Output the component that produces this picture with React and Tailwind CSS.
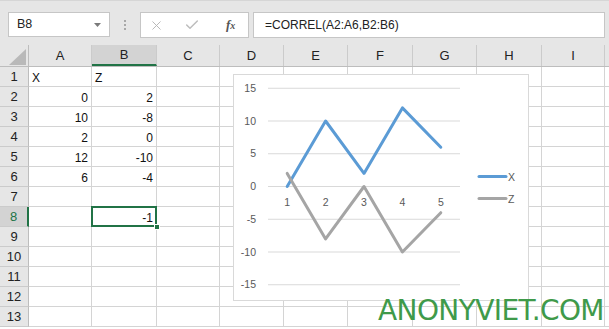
import { X, Check } from 'lucide-react';

const COLS = [
  { key: 'A', w: 'w-[63px]' },
  { key: 'B', w: 'w-[65px]' },
  { key: 'C', w: 'w-[63px]' },
  { key: 'D', w: 'w-[64px]' },
  { key: 'E', w: 'w-[64px]' },
  { key: 'F', w: 'w-[65px]' },
  { key: 'G', w: 'w-[64px]' },
  { key: 'H', w: 'w-[65px]' },
  { key: 'I', w: 'w-[63px]' },
];

const DATA = {
  1: { A: ['X', 'left'], B: ['Z', 'left'] },
  2: { A: ['0'], B: ['2'] },
  3: { A: ['10'], B: ['-8'] },
  4: { A: ['2'], B: ['0'] },
  5: { A: ['12'], B: ['-10'] },
  6: { A: ['6'], B: ['-4'] },
  8: { B: ['-1'] },
};

const XS = [0, 10, 2, 12, 6];
const ZS = [2, -8, 0, -10, -4];

// chart coords (relative to chart box)
const cx = (i) => 54.2 + 38.4 * i;
const cy = (v) => 112.5 - 6.55 * v;
const pts = (arr) => arr.map((v, i) => `${cx(i)},${cy(v)}`).join(' ');

function FormulaBar() {
  return (
    <div className="h-[45px] bg-[#e6e6e6] border-t border-[#d6d6d6] flex items-start pt-[11px]">
      <div className="ml-[8px] w-[102px] h-[25px] bg-white border border-[#c6c6c6] flex items-center justify-between pl-[8px] pr-[8px]">
        <span className="text-[12.5px] text-[#222]">B8</span>
        <svg width="7" height="4" viewBox="0 0 7 4"><path d="M0 0h7L3.5 4z" fill="#7a7a7a" /></svg>
      </div>
      <div className="w-[30px] h-[25px] flex flex-col items-center justify-center gap-[2px]">
        <span className="w-[2px] h-[2px] bg-[#a8a8a8]" />
        <span className="w-[2px] h-[2px] bg-[#a8a8a8]" />
        <span className="w-[2px] h-[2px] bg-[#a8a8a8]" />
      </div>
      <div className="w-[109px] h-[26px] bg-white border border-[#c6c6c6] flex items-center">
        <X size={15} strokeWidth={1.5} className="text-[#b4b4b4] ml-[8px]" />
        <Check size={16} strokeWidth={2.2} className="text-[#bdbdbd] ml-[20px]" />
        <span className="ml-[26px] text-[13px] italic text-[#555] font-['Liberation_Serif',serif] font-semibold">f<span className="text-[10px]">x</span></span>
      </div>
      <div className="ml-[4px] w-[352px] h-[26px] bg-white border border-[#c6c6c6] flex items-center pl-[11px]">
        <span className="text-[12px] text-[#222]">=CORREL(A2:A6,B2:B6)</span>
      </div>
    </div>
  );
}

function HeaderRow() {
  return (
    <div className="flex h-[22px] bg-[#e6e6e6] border-b border-[#bdbdbd]">
      <div className="w-[29px] shrink-0 border-r border-[#bdbdbd] flex items-end justify-end pr-[2px] pb-[1px]">
        <svg width="17" height="16" viewBox="0 0 17 16"><path d="M17 0V16H0z" fill="#b9b9b9" /></svg>
      </div>
      {COLS.map((c) => (
        <div
          key={c.key}
          className={`${c.w} shrink-0 border-r border-[#cbcbcb] flex items-center justify-center text-[13px] text-[#222] ${
            c.key === 'B' ? 'bg-[#d3d3d3] border-b-2 border-b-[#217346]' : ''
          }`}
        >
          {c.key}
        </div>
      ))}
      <div className="flex-1" />
    </div>
  );
}

function Row({ n }) {
  const sel = n === 8;
  return (
    <div className="flex h-[20px]">
      <div
        className={`w-[29px] shrink-0 border-b border-[#cbcbcb] flex items-center justify-center text-[13px] ${
          sel ? 'bg-[#d3d3d3] text-[#217346] border-r-2 border-r-[#217346]' : 'bg-[#e6e6e6] text-[#222] border-r border-r-[#bdbdbd]'
        }`}
      >
        {n}
      </div>
      {COLS.map((c) => {
        const cell = DATA[n]?.[c.key];
        const left = cell?.[1] === 'left';
        const active = sel && c.key === 'B';
        return (
          <div
            key={c.key}
            className={`${c.w} shrink-0 border-r border-b border-[#d4d4d4] flex items-end leading-[14px] pb-[1px] text-[12px] text-[#111] ${
              left ? 'justify-start pl-[3px]' : 'justify-end pr-[3px]'
            } ${active ? 'relative' : ''}`}
          >
            {cell?.[0]}
            {active && (
              <>
                <div className="absolute -left-[1px] -top-[1px] right-[-1px] bottom-[-1px] border-2 border-[#217346]" />
                <div className="absolute right-[-4px] bottom-[-4px] w-[6px] h-[6px] bg-[#217346] border border-white" />
              </>
            )}
          </div>
        );
      })}
      <div className="flex-1 border-b border-[#d4d4d4]" />
    </div>
  );
}

function Chart() {
  const grid = [15, 10, 5, 0, -5, -10, -15];
  return (
    <div className="absolute left-[233px] top-[74px] w-[296px] h-[227px] bg-white border border-[#d9d9d9]">
      <svg width="296" height="227" className="absolute -left-[1px] -top-[1px]" style={{ fontFamily: 'Liberation Sans, Arial, sans-serif' }}>
        {grid.map((v) => (
          <g key={v}>
            <line x1="35" x2="227" y1={cy(v)} y2={cy(v)} stroke="#d9d9d9" strokeWidth="1" />
            <text x="23" y={cy(v) + 3.5} textAnchor="end" fontSize="10.5" fill="#595959">{v}</text>
          </g>
        ))}
        {[1, 2, 3, 4, 5].map((k, i) => (
          <text key={k} x={cx(i)} y="132" textAnchor="middle" fontSize="10.5" fill="#595959">{k}</text>
        ))}
        <polyline points={pts(XS)} fill="none" stroke="#5b9bd5" strokeWidth="3" strokeLinejoin="round" strokeLinecap="round" />
        <polyline points={pts(ZS)} fill="none" stroke="#a5a5a5" strokeWidth="3" strokeLinejoin="round" strokeLinecap="round" />
        <line x1="246" x2="273" y1="102.5" y2="102.5" stroke="#5b9bd5" strokeWidth="3" strokeLinecap="round" />
        <text x="275" y="106.5" fontSize="10.5" fill="#595959">X</text>
        <line x1="246" x2="273" y1="124.5" y2="124.5" stroke="#a5a5a5" strokeWidth="3" strokeLinecap="round" />
        <text x="275" y="128.5" fontSize="10.5" fill="#595959">Z</text>
      </svg>
    </div>
  );
}

export default function App() {
  return (
    <div className="relative w-[609px] h-[329px] overflow-hidden bg-white font-['Liberation_Sans',Arial,sans-serif]">
      <FormulaBar />
      <HeaderRow />
      {Array.from({ length: 13 }, (_, i) => (
        <Row key={i} n={i + 1} />
      ))}
      <Chart />
      <div className="absolute left-[378px] top-[297px] text-[28px] leading-none tracking-[-0.6px] text-[#3f9a4a] font-['DejaVu_Sans',sans-serif]">
        ANONYVIET.COM
      </div>
    </div>
  );
}
